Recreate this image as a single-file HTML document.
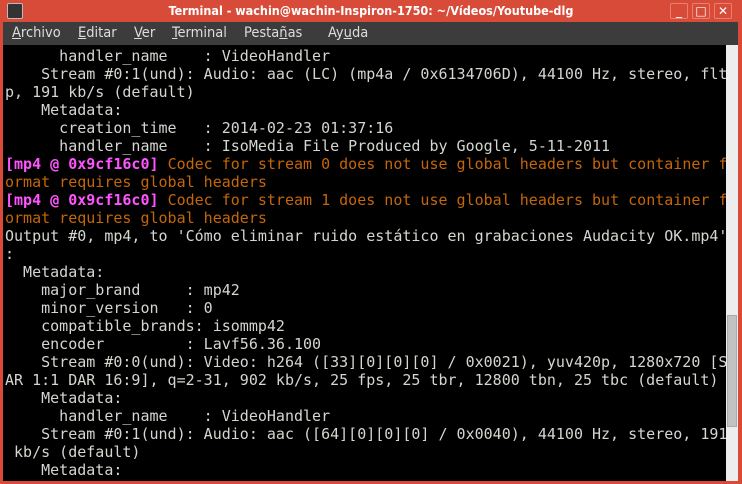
<!DOCTYPE html>
<html><head><meta charset="utf-8"><style>
html,body{margin:0;padding:0;width:742px;height:484px;overflow:hidden;background:#d94a38;}
#title{position:absolute;left:0;top:0;width:742px;height:22px;background:#d84b38;color:#fff;font:bold 13px "Liberation Sans",sans-serif;}
#title .t{position:absolute;left:0;width:742px;top:3px;text-align:center;font-family:"DejaVu Sans Condensed","DejaVu Sans",sans-serif;font-weight:bold;font-size:12.5px;}
#icon{position:absolute;left:7px;top:3px;width:16px;height:16px;background:#333;border:1px solid #bbb;box-sizing:border-box;border-radius:2px;}
.wb{position:absolute;top:3px;width:18px;height:16px;border:1px solid #e88070;box-sizing:border-box;border-radius:2px;color:#fff;font:12px "DejaVu Sans",sans-serif;text-align:center;line-height:14px;}
#menu{position:absolute;left:3px;top:22px;width:735px;height:23px;background:#3c3c3c;color:#ddd;font:14.5px "DejaVu Sans Condensed","DejaVu Sans",sans-serif;}
#menu span{position:absolute;top:3px;}
#term{position:absolute;left:3px;top:45px;width:723px;height:436px;background:#000;overflow:hidden;}
pre{margin:0;position:absolute;left:2px;top:2px;font:15px/18px "DejaVu Sans Mono",monospace;color:#d3d7cf;}
.m{color:#ff55ff;font-weight:bold}.o{color:#c4660a}
#sb{position:absolute;left:726px;top:45px;width:12px;height:436px;background:#ededed;}
#th{position:absolute;left:727px;top:315px;width:10px;height:112px;background:#c2c2c2;border:1px solid #aaa;box-sizing:border-box;}
</style></head><body>
<div id="title"><div id="icon"></div><div class="t">Terminal - wachin@wachin-Inspiron-1750: ~/Vídeos/Youtube-dlg</div>
<div class="wb" style="left:670px">_</div><div class="wb" style="left:692px">□</div><div class="wb" style="left:714px">✕</div></div>
<div id="menu"><span style="left:9px"><u>A</u>rchivo</span><span style="left:75px"><u>E</u>ditar</span><span style="left:131px"><u>V</u>er</span><span style="left:169px"><u>T</u>erminal</span><span style="left:241px">Pesta<u>ñ</u>as</span><span style="left:325px">Ay<u>u</u>da</span></div>
<div id="term"><pre>      handler_name    : VideoHandler
    Stream #0:1(und): Audio: aac (LC) (mp4a / 0x6134706D), 44100 Hz, stereo, flt
p, 191 kb/s (default)
    Metadata:
      creation_time   : 2014-02-23 01:37:16
      handler_name    : IsoMedia File Produced by Google, 5-11-2011
<span class="m">[mp4 @ 0x9cf16c0]</span> <span class="o">Codec for stream 0 does not use global headers but container f
ormat requires global headers</span>
<span class="m">[mp4 @ 0x9cf16c0]</span> <span class="o">Codec for stream 1 does not use global headers but container f
ormat requires global headers</span>
Output #0, mp4, to 'Cómo eliminar ruido estático en grabaciones Audacity OK.mp4'
:
  Metadata:
    major_brand     : mp42
    minor_version   : 0
    compatible_brands: isommp42
    encoder         : Lavf56.36.100
    Stream #0:0(und): Video: h264 ([33][0][0][0] / 0x0021), yuv420p, 1280x720 [S
AR 1:1 DAR 16:9], q=2-31, 902 kb/s, 25 fps, 25 tbr, 12800 tbn, 25 tbc (default)
    Metadata:
      handler_name    : VideoHandler
    Stream #0:1(und): Audio: aac ([64][0][0][0] / 0x0040), 44100 Hz, stereo, 191
 kb/s (default)
    Metadata:</pre></div>
<div id="sb"></div><div id="th"></div>
</body></html>
